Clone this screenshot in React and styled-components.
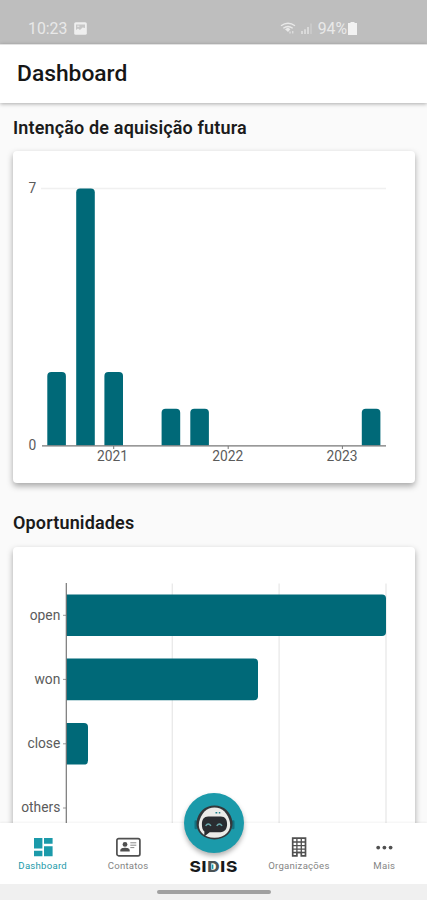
import React from "react";
import styled, { createGlobalStyle } from "styled-components";

const TEAL = "#006978";
const ACCENT = "#1b9aaa";

const GlobalStyle = createGlobalStyle`
  * { box-sizing: border-box; }
  body { margin: 0; background: #fafafa; font-family: Roboto, "Liberation Sans", sans-serif; }
`;

const Screen = styled.div`
  width: 427px;
  height: 900px;
  display: flex;
  flex-direction: column;
  overflow: hidden;
  background: #fafafa;
`;

const StatusBar = styled.div`
  flex: none;
  height: 44px;
  padding: 13px 70px 0 28px;
  display: flex;
  justify-content: space-between;
  background: #bebebe;
  color: #e9e9e9;
  font-size: 15.8px;
  line-height: 31px;
`;

const StatusGroup = styled.div`
  display: flex;
  align-items: center;
  height: 31px;
  gap: ${(p) => p.$gap}px;
`;

const Header = styled.header`
  flex: none;
  height: 59px;
  padding: 0 17px;
  display: flex;
  align-items: center;
  background: #fff;
  border-top: 1px solid #e2e2e2;
  box-shadow: 0 1px 4px rgba(0, 0, 0, 0.32);
  z-index: 1;
`;

const Title = styled.h1`
  margin: 0;
  font-size: 22.8px;
  font-weight: 500;
  line-height: 30px;
  color: #161616;
`;

const Content = styled.main`
  flex: 1;
  min-height: 0;
  overflow: hidden;
  padding: 13px 12px 0 13px;
`;

const SectionTitle = styled.h2`
  margin: 0 0 12px;
  font-size: 18px;
  line-height: 23px;
  font-weight: 600;
  letter-spacing: 0.15px;
  color: #1b1b1b;
`;

const Card = styled.section`
  height: 332px;
  margin-bottom: 28px;
  border-radius: 4px;
  background: #fff;
  box-shadow: 0 3px 6px rgba(0, 0, 0, 0.34);

  & + ${SectionTitle} {
    margin-bottom: 13px;
  }
`;

const Chart = styled.svg`
  display: block;
  font-family: Roboto, sans-serif;
  font-size: 13.8px;
  fill: #5b5b5b;
`;

const Nav = styled.nav`
  flex: none;
  height: 61px;
  display: grid;
  grid-template-columns: repeat(5, 1fr);
  background: #fff;
  box-shadow: 0 -1px 2px rgba(0, 0, 0, 0.05);
  z-index: 1;
`;

const NavItem = styled.div`
  display: flex;
  flex-direction: column;
  align-items: center;
  padding-top: 12px;
  color: ${(p) => (p.$active ? ACCENT : "#505050")};
`;

const NavLabel = styled.span`
  font-size: 9.6px;
  line-height: 12px;
  letter-spacing: 0.25px;
  white-space: nowrap;
  color: ${(p) => (p.$active ? ACCENT : "#858585")};
`;

const AssistantItem = styled.div`
  display: flex;
  flex-direction: column;
  align-items: center;
  padding-left: 1px;
`;

const AssistantButton = styled.div`
  flex: none;
  width: 60px;
  height: 60px;
  margin-top: -30px;
  border-radius: 50%;
  background: ${ACCENT};
  box-shadow: 0 3px 5px rgba(0, 0, 0, 0.3);
`;

const Wordmark = styled.svg`
  display: block;
  flex: none;
  margin-top: 3px;
  overflow: visible;
`;

const GestureArea = styled.div`
  flex: none;
  height: 16px;
  display: flex;
  justify-content: center;
  padding-top: 6px;
  background: #f0f0f0;
`;

const GestureHandle = styled.div`
  width: 114px;
  height: 4px;
  border-radius: 2px;
  background: #a0a0a0;
`;

const Picture = () => (
  <svg width="13" height="13" viewBox="0 0 13 13">
    <rect x="0.2" y="0.2" width="12.6" height="12.6" rx="1.6" fill="#efefef" />
    <path d="M2 8V2.5h9v3.6L8.6 5.4 6 8 4 6.6z" fill="#c7c7c7" />
    <path d="M3.2 4.2h2.2" stroke="#efefef" />
  </svg>
);

const Wifi = () => (
  <svg width="16" height="13" viewBox="0 0 16 13" fill="none" stroke="#e9e9e9" strokeWidth="1.4">
    <path d="M1 3.8Q8-1.3 15 3.8M3.3 6.2Q8 2.7 12.7 6.2" />
    <path d="m5 7.2 3-1.6 2.4 1.6L8 10z" fill="#e9e9e9" stroke="none" />
    <path d="M10 9.5v2M12.8 9v2.5" strokeWidth="1" />
  </svg>
);

const Signal = () => (
  <svg width="12" height="13" viewBox="0 0 12 13" fill="none" stroke="#e5e5e5" strokeWidth="1.4">
    <path d="M1 12v-3M4 12V7.3M7 12V5" />
    <path d="M10 12V1.5" stroke="#cecece" />
  </svg>
);

const Battery = () => (
  <svg width="9" height="13" viewBox="0 0 9 13" fill="#f2f2f2">
    <path d="M2.5 0h4v1H9v12H0V1h2.5z" />
  </svg>
);

const columns = [
  { x: 34.3, value: 2 },
  { x: 63.2, value: 7 },
  { x: 91.4, value: 2 },
  { x: 148.6, value: 1 },
  { x: 177.3, value: 1 },
  { x: 348.8, value: 1 },
];
const years = [
  { x: 100.7, label: "2021", text: 99.4 },
  { x: 215.2, label: "2022", text: 214.8 },
  { x: 329.4, label: "2023", text: 328.9 },
];

const ColumnChart = () => (
  <Chart width="402" height="332" viewBox="0 0 402 332">
    <path d="M28 37.5h345" stroke="#f0f0f0" strokeWidth="1.5" />
    {columns.map(({ x, value }) => {
      const top = 294.5 - value * 36.7;
      return (
        <path
          key={x}
          fill={TEAL}
          d={`M${x} 294.5V${top + 4}q0-4 4-4h10.6q4 0 4 4V294.5z`}
        />
      );
    })}
    <path d="M29 294.9h344" stroke="#777" strokeWidth="1.1" />
    <text x="23.3" y="42.2" textAnchor="end">7</text>
    <text x="23.3" y="299.4" textAnchor="end">0</text>
    {years.map((y) => (
      <g key={y.label}>
        <path d={`M${y.x} 295v3`} stroke="#777" />
        <text x={y.text} y="310.2" textAnchor="middle">{y.label}</text>
      </g>
    ))}
  </Chart>
);

const stages = [
  { label: "open", y: 68.3, width: 320 },
  { label: "won", y: 132.4, width: 192 },
  { label: "close", y: 196.8, width: 22 },
  { label: "others", y: 261, width: 0 },
];

const BarChart = () => (
  <Chart width="402" height="332" viewBox="0 0 402 332">
    <path d="M159.3 36.5v290M266.1 36.5v290M373 36.5v290" stroke="#e9e9e9" strokeWidth="1.3" />
    {stages.map(({ label, y, width }) => (
      <g key={label}>
        {width > 0 && (
          <path
            fill={TEAL}
            d={`M53 ${y - 20.8}h${width - 4}q4 0 4 4v33.6q0 4-4 4H53z`}
          />
        )}
        <path d={`M50 ${y}h3`} stroke="#999" />
        <text x="47.3" y={y + 4.2} textAnchor="end">{label}</text>
      </g>
    ))}
    <path d="M53.3 36v290" stroke="#777" strokeWidth="1.2" />
  </Chart>
);

const DashboardIcon = () => (
  <svg width="26" height="25" viewBox="0 0 26 25" fill="currentColor">
    <path d="M4 3h8.4v10.4H4zM14 3h8.6v5.7H14zM4 15.7h8.4v5.6H4zM14 11.2h8.6v10.1H14z" />
  </svg>
);

const ContactIcon = () => (
  <svg width="26" height="25" viewBox="0 0 26 25">
    <rect x="1.9" y="3.6" width="23" height="17.2" rx="1.8" fill="none" stroke="currentColor" strokeWidth="1.7" />
    <circle cx="10" cy="9.4" r="2.4" fill="currentColor" />
    <path d="M5.3 16.6v-1.2c0-2 2.5-2.6 4.7-2.6s4.7.6 4.7 2.6v1.2z" fill="currentColor" />
    <path d="M15.3 7.8h6M15.3 10.2h6M15.3 12.6h4" stroke="#888" strokeWidth="1" />
  </svg>
);

const BuildingIcon = () => (
  <svg width="26" height="25" viewBox="0 0 26 25" fill="none" stroke="currentColor">
    <path d="M6.7 3.2h12.8v17.6h-4.2v-3.3h-4.4v3.3H6.7z" strokeWidth="1.7" />
    <path d="M6 7h14M6 10.6h14M6 14.2h14M6 17.5h14M10.9 3v15M15.3 3v15" strokeWidth="1.3" />
  </svg>
);

const MoreIcon = () => (
  <svg width="26" height="25" viewBox="0 0 26 25" fill="currentColor">
    <circle cx="7.2" cy="12.6" r="1.9" />
    <circle cx="13.4" cy="12.6" r="1.9" />
    <circle cx="19.6" cy="12.6" r="1.9" />
  </svg>
);

const Robot = () => (
  <svg width="60" height="60" viewBox="0 0 60 60">
    <path d="M11.8 28.5v6.5M49.2 28.5v6.5" stroke="#137180" strokeWidth="2.6" strokeLinecap="round" />
    <path d="M30.5 12.6c-9.4 0-16.6 6.6-18 16.4-.8 10 7.2 17.4 18 17.4s18.8-7.4 18-17.4c-1.4-9.8-8.6-16.4-18-16.4z" fill="#33383b" />
    <path d="M30.5 14.4c-8 0-13.4 6-15.4 14.6-1.8 8.6 4.4 15.7 15.4 15.7S47.7 37.6 45.9 29c-2-8.6-7.4-14.6-15.4-14.6z" fill="#ebebe8" />
    <path d="M24.2 23.5h12.6c4.4 0 6.3 3.3 6.3 7.5 0 5-2.3 8-6.7 8.2H25.7l-5.5 4.2.2-4.8c-2-1.5-2.5-4.2-2.5-7.3 0-4.8 2.1-7.8 6.3-7.8z" fill="#292c30" />
    <path d="M21.6 32.8q2.7-3.6 5.4 0M32.7 32.8q2.7-3.6 5.4 0" fill="none" stroke="#69a9ac" strokeWidth="1.4" />
    <path d="M31.5 19.7h1.8M34.8 19.7h1.5" stroke="#22818a" strokeWidth="1.6" />
  </svg>
);

const NavEntry = ({ label, active, icon: Icon }) => (
  <NavItem $active={active}>
    <Icon />
    <NavLabel $active={active}>{label}</NavLabel>
  </NavItem>
);

export default function App() {
  return (
    <>
      <GlobalStyle />
      <Screen>
        <StatusBar>
          <StatusGroup $gap={7}>
            <span>10:23</span>
            <Picture />
          </StatusGroup>
          <StatusGroup $gap={5}>
            <Wifi />
            <Signal />
            <StatusGroup $gap={1}>
              <span>94%</span>
              <Battery />
            </StatusGroup>
          </StatusGroup>
        </StatusBar>
        <Header>
          <Title>Dashboard</Title>
        </Header>
        <Content>
          <SectionTitle>Intenção de aquisição futura</SectionTitle>
          <Card>
            <ColumnChart />
          </Card>
          <SectionTitle>Oportunidades</SectionTitle>
          <Card>
            <BarChart />
          </Card>
        </Content>
        <Nav>
          <NavEntry label="Dashboard" active icon={DashboardIcon} />
          <NavEntry label="Contatos" icon={ContactIcon} />
          <AssistantItem>
            <AssistantButton>
              <Robot />
            </AssistantButton>
            <Wordmark width="50" height="22" viewBox="0 0 50 22">
              <text
                x="0.4"
                y="15.8"
                textLength="48.8"
                lengthAdjust="spacingAndGlyphs"
                fontFamily="Inter, sans-serif"
                fontSize="14.6"
                fontWeight="800"
                letterSpacing="0.7"
                fill="#17191b"
              >
                SI<tspan fill="#4b5355">D</tspan>IS
              </text>
              <path d="M4 8.9h9.5M0 12.3h9.5M39.5 8.9H49M36 12.3h9" stroke="#fff" strokeWidth="0.6" />
              <path d="M23.6 8.5v4.4" stroke={ACCENT} strokeWidth="1.6" />
            </Wordmark>
          </AssistantItem>
          <NavEntry label="Organizações" icon={BuildingIcon} />
          <NavEntry label="Mais" icon={MoreIcon} />
        </Nav>
        <GestureArea>
          <GestureHandle />
        </GestureArea>
      </Screen>
    </>
  );
}
